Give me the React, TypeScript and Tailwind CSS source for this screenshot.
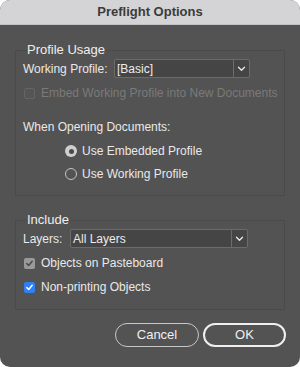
import React from "react";

const font = { fontFamily: '"Liberation Sans", Arial, sans-serif' };

function Chevron() {
  return (
    <svg width="9" height="6" viewBox="0 0 9 6" fill="none">
      <path d="M1.5 1.3 L4.5 4.3 L7.5 1.3" stroke="#e6e6e6" strokeWidth="1.4" strokeLinecap="round" strokeLinejoin="round" />
    </svg>
  );
}

function Select({ value, width }: { value: string; width: string }) {
  return (
    <div className={`flex h-[19px] ${width} rounded-[2px] border border-[#6b6b6b] bg-[#454545]`}>
      <div className="flex flex-1 items-center pl-[2px] text-[12px] text-[#ececec]">{value}</div>
      <div className="flex w-[16px] items-center justify-center border-l border-[#6b6b6b]">
        <Chevron />
      </div>
    </div>
  );
}

function Check({ state }: { state: "disabled" | "gray" | "blue" }) {
  if (state === "disabled") {
    return <div className="h-[11px] w-[11px] rounded-[2px] border border-[#646464] bg-[#555555]" />;
  }
  const bg = state === "blue" ? "bg-[#2f7ff5]" : "bg-[#9a9a9a]";
  const stroke = state === "blue" ? "#ffffff" : "#4a4a4a";
  return (
    <div className={`flex h-[11px] w-[11px] items-center justify-center rounded-[2px] ${bg}`}>
      <svg width="9" height="9" viewBox="0 0 9 9" fill="none">
        <path d="M1.8 4.6 L3.7 6.5 L7.2 2.3" stroke={stroke} strokeWidth="1.5" strokeLinecap="round" strokeLinejoin="round" />
      </svg>
    </div>
  );
}

function Radio({ on }: { on: boolean }) {
  if (on) {
    return (
      <div className="flex h-[12px] w-[12px] items-center justify-center rounded-full bg-[#cfcfcf]">
        <div className="h-[5px] w-[5px] rounded-full bg-[#4a4a4a]" />
      </div>
    );
  }
  return <div className="h-[12px] w-[12px] rounded-full border border-[#c4c4c4]" />;
}

export default function App() {
  return (
    <div className="h-[367px] w-[300px] bg-white" style={font}>
      <div className="flex h-[367px] w-[300px] flex-col overflow-hidden rounded-[10px] bg-[#535353]">
        <div className="flex h-[25px] shrink-0 items-center justify-center border-b border-[#c2c2c4] bg-[#d4d4d6] text-[13px] font-bold text-[#3b3b3b]">
          Preflight Options
        </div>

        <div className="flex flex-col px-[15px] pt-[17px]">
          <fieldset className="m-0 min-w-0 border border-[#4a4a4a] px-[7px] pb-[13px] pt-[1px] text-[12px] text-[#e9e9e9]">
            <legend className="ml-[4px] p-0 text-[13px] leading-[16px] text-[#eeeeee]">Profile Usage</legend>
            <div className="flex h-[19px] items-center">
              <span className="w-[91px] whitespace-nowrap">Working Profile:</span>
              <Select value="[Basic]" width="w-[136px]" />
            </div>
            <div className="mt-[7px] flex h-[16px] items-center whitespace-nowrap">
              <div className="ml-[1px] w-[17px] shrink-0">
                <Check state="disabled" />
              </div>
              <span className="text-[#7a7a7a]">Embed Working Profile into New Documents</span>
            </div>
            <div className="mt-[18px] flex h-[16px] items-center">When Opening Documents:</div>
            <div className="mt-[8px] flex h-[16px] items-center pl-[42px]">
              <div className="w-[17px]">
                <Radio on={true} />
              </div>
              <span>Use Embedded Profile</span>
            </div>
            <div className="mt-[7px] flex h-[16px] items-center pl-[42px]">
              <div className="w-[17px]">
                <Radio on={false} />
              </div>
              <span>Use Working Profile</span>
            </div>
          </fieldset>

          <fieldset className="m-0 mt-[16px] min-w-0 border border-[#4a4a4a] px-[7px] pb-[14px] pt-[1px] text-[12px] text-[#e9e9e9]">
            <legend className="ml-[4px] p-0 text-[13px] leading-[16px] text-[#eeeeee]">Include</legend>
            <div className="flex h-[19px] items-center">
              <span className="w-[47px]">Layers:</span>
              <Select value="All Layers" width="w-[178px]" />
            </div>
            <div className="mt-[7px] flex h-[16px] items-center">
              <div className="ml-[1px] w-[17px]">
                <Check state="gray" />
              </div>
              <span>Objects on Pasteboard</span>
            </div>
            <div className="mt-[8px] flex h-[16px] items-center">
              <div className="ml-[1px] w-[17px]">
                <Check state="blue" />
              </div>
              <span>Non-printing Objects</span>
            </div>
          </fieldset>

          <div className="mt-[13px] flex justify-end gap-[4px] text-[13px] text-[#f0f0f0]">
            <button className="flex h-[24px] w-[84px] items-center justify-center rounded-full border-[1.5px] border-[#c8c8c8] bg-[#535353]">
              Cancel
            </button>
            <button className="mr-[-1px] flex h-[24px] w-[83px] items-center justify-center rounded-full border-2 border-[#efefef] bg-[#535353]">
              OK
            </button>
          </div>
        </div>
      </div>
    </div>
  );
}
